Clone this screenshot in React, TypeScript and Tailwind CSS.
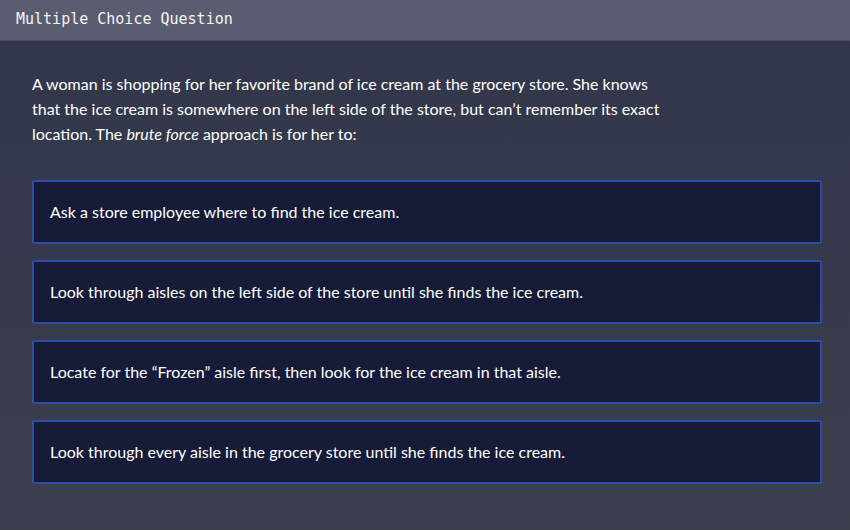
import React from "react";

const options = [
  "Ask a store employee where to find the ice cream.",
  "Look through aisles on the left side of the store until she finds the ice cream.",
  "Locate for the \u201cFrozen\u201d aisle first, then look for the ice cream in that aisle.",
  "Look through every aisle in the grocery store until she finds the ice cream.",
];

export default function App() {
  return (
    <div className="w-[850px] h-[530px] flex flex-col bg-gradient-to-b from-[#31364a] to-[#3b3e4d] overflow-hidden">
      <div className="h-[41px] shrink-0 bg-[#5a5d6f] flex items-center px-4 pb-[2px] border-b border-[#4a4d5e]">
        <span className="text-[15px] text-[#f4f4f6]" style={{ fontFamily: '"DejaVu Sans Mono", "Liberation Mono", monospace' }}>
          Multiple Choice Question
        </span>
      </div>
      <div className="flex flex-col px-8 pt-[30px]" style={{ fontFamily: 'Lato, "Noto Sans", sans-serif' }}>
        <p className="text-[16px] leading-[25px] text-white">
          A woman is shopping for her favorite brand of ice cream at the grocery store. She knows
          <br />
          that the ice cream is somewhere on the left side of the store, but can’t remember its exact
          <br />
          location. The <em>brute force</em> approach is for her to:
        </p>
        <div className="flex flex-col gap-[16px] mt-[34px]">
          {options.map((o) => (
            <div key={o} className="h-[64px] w-[790px] flex items-center px-4 bg-[#161b38] border-2 border-[#2d4ea8] rounded-[2px]">
              <span className="text-[16px] text-white">{o}</span>
            </div>
          ))}
        </div>
      </div>
    </div>
  );
}
